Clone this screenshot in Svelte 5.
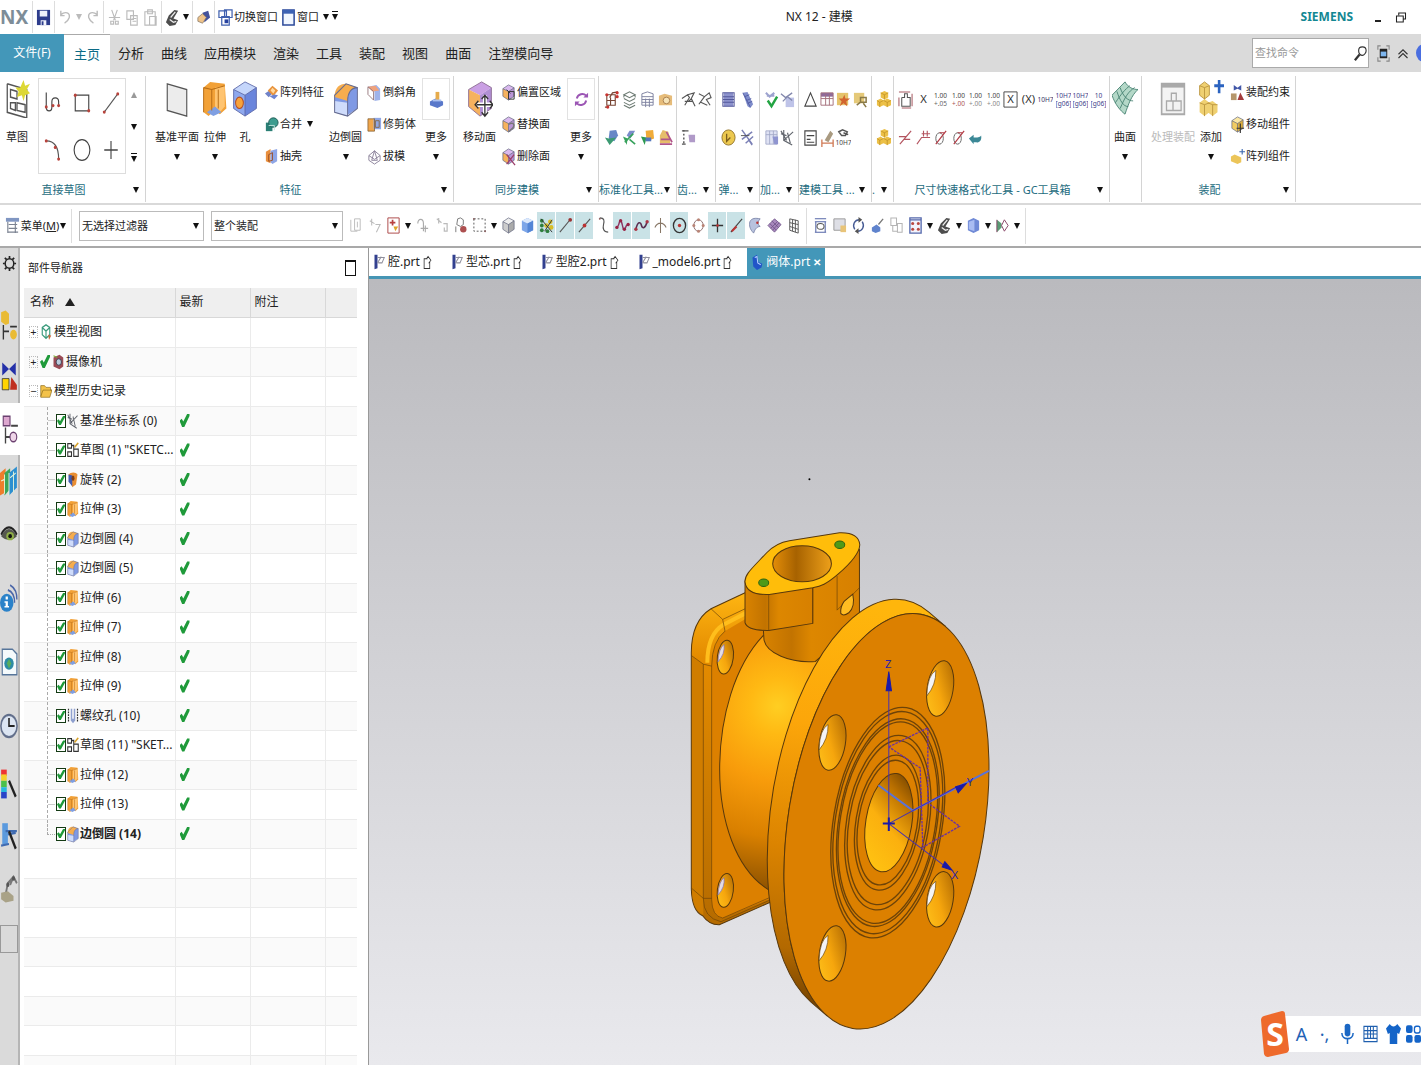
<!--
  @component ModelingWorkspace
  @fileoverview CAD modeling window: title bar, ribbon, selection bar,
  part navigator and the graphics area with the current part.
-->
<script lang="ts">
  // ===========================================================================
  //  Icon shapes (16 x 20)
  // ===========================================================================

  const cube = (top: string, left: string, right: string) =>
    `<path fill="${top}" d="M2 6l6-4 6 3-6 4z"/><path fill="${left}" d="M2 6l6 3v9l-6-4z"/><path fill="${right}" d="M14 5l-6 4v9l6-4z"/><path d="M2 6l6-4 6 3v9l-6 4-6-4zM2 6l6 3 6-4M8 9v9" fill="none" stroke="#5b5f78" stroke-width=".7"/>`;

  const line = (d: string, color = '#333', width = 1.2) =>
    `<path d="${d}" fill="none" stroke="${color}" stroke-width="${width}"/>`;

  const fill = (d: string, color: string) => `<path d="${d}" fill="${color}"/>`;

  const dots = (points: number[][], color = '#b8433c', r = 1.3) =>
    points.map(([x, y]) => `<circle cx="${x}" cy="${y}" r="${r}" fill="${color}"/>`).join('');

  const word = (text: string, y: number, size: number, color: string) =>
    `<text x="8" y="${y}" text-anchor="middle" font-size="${size}" fill="${color}">${text}</text>`;

  const words = (top: string, bottom: string, a = '#444', b = a) => word(top, 8, 7, a) + word(bottom, 17, 7, b);

  const blue = cube('#c5d6fb', '#8fa9ee', '#6a85dc');
  const violet = cube('#d9b8ee', '#f6b25e', '#b995d6');
  const yellow = cube('#fbe7a2', '#f1cc62', '#dcae3d');
  const grey = cube('#eee', '#ccc', '#aaa');
  const nxMark =
    fill('M4 8l6-6 4 1-5 8 5 2-3 5-6 1-4-4z', '#4d4d4d') + line('M6 10l5-6M5 12l4 3 3-1', '#eee', 1.3);
  const yellowPair =
    fill('M5 3l4-2 4 2v5l-4 2-4-2zM1 11l4-2 3 2v5l-4 2-3-2zM8 11l4-2 4 2v5l-4 2-4-2z', '#ecc047') +
    line('M5 3l4 2v5M9 5l4-2M1 11l3 2v5M4 13l4-2M8 11l4 2v5M12 13l4-2', '#b98a20', 0.7);

  const icons: Record<string, string> = {
    save: fill('M1 2h14v16H1z', '#2d3c8c') + fill('M4 3h8v6H4zM5 13h6v5H5z', '#eef1fb') + fill('M6 14h2v4H6z', '#2d3c8c'),
    undo: line('M3 7c5-4 10-2 9 3-1 3-3 5-5 6M3 3v5h4', '#bbb', 1.5),
    redo: line('M13 7C8 3 3 5 4 10c1 3 3 5 5 6M13 3v5H9', '#bbb', 1.5),
    cut: line('M5 2l4 11M11 2L7 13M2 10h12', '#bbb') + line('M4 14h3v3H4zM9 14h3v3H9z', '#bbb'),
    copy: line('M2 3h7v9H2zM6 8h7v10H6zM8 11h4M8 14h4', '#bbb'),
    paste: line('M2 4h11v14H2zM5 2h5v4H5zM7 9h7v9H7z', '#bbb'),
    nx: nxMark,
    touch: fill('M7 5l6-2 2 7-6 5z', '#43519b') + fill('M2 10l5-4 4 4-4 6-5-2z', '#efc38a') + line('M2 10l5-4 4 4-4 6-5-2z', '#876', 0.8),
    switchWin: line('M1 3h8v7H1zM7 2h8v8H7zM4 9h8v9H4z', '#3f5fae', 1.3) + fill('M7 12h4v4H7z', '#2742a0'),
    win: fill('M2 2h12v16H2z', '#f0f6ff') + line('M2 2h12v16H2z', '#2c4a9a', 1.6) + fill('M2 2h12v4H2z', '#3c62b4'),
    restore: line('M2 8h9v8H2zM5 7V4h9v8h-3', '#222', 1.4),
    close: line('M3 4l10 12M13 4L3 16', '#222', 1.6),
    search: line('M7 11l-5 6', '#333', 2.4) + line('M10 3c3 0 4 2 4 4s-2 5-4 5-4-2-4-5 2-4 4-4z', '#333', 1.2),
    full: line('M2 6V2h3M11 2h3v4M14 14v4h-3M5 18H2v-4', '#888') + fill('M4 5h8v10H4z', '#222') + fill('M5 8h6v5H5z', '#7eb6ee'),
    up: line('M2 11l6-6 6 6M2 16l6-6 6 6', '#333', 1.5),

    sketch: line('M2 2v15l12 3V5L2 2M4 5l4 1v4l-4-1zM4 12h3v4l-3-1zM8 12l5 1v4l-5-1z', '#555', 0.8) + fill('M12 0l1 3 3-1-2 3 2 2-3 1-1 3-1-3-3 1 1-3-2-2 3 0z', '#ddd834'),
    spline: line('M2 2v11c0 4 5 4 5 0V9c0-4 6-4 6 0v3', '#444', 1) + dots([[2, 13], [8, 12], [13, 12]]),
    rect: line('M2 4h12v12H2z', '#444', 1) + dots([[2, 4], [14, 16]]),
    segment: line('M2 17L14 3', '#555', 1) + dots([[2, 17], [14, 3]]),
    arc: line('M2 3c8 0 11 6 11 14', '#555', 1) + dots([[2, 3], [10, 8], [13, 17]]),
    circle: '<ellipse cx="8" cy="10" rx="7" ry="8" fill="none" stroke="#444"/>',
    plus: line('M8 3v14M2 10h12', '#444', 1),

    plane: '<path d="M2 2l12 3v14L2 16z" fill="#ececec" stroke="#555" stroke-width=".7"/>',
    extrude: fill('M1 4l4-3 9 1 1 13-4 3-3-2-4 3-3-2z', '#f2a137') + fill('M8 4l6-1v11l-3 3-3-3z', '#ffc470') + fill('M3 17l5-3 4 3-5 2z', '#7f9fe2') + line('M1 4l5 1 8-2M6 5v11M10 5v10M1 4v13', '#b86d16', 0.6),
    hole: fill('M1 5l7-4 7 3-7 4z', '#c5d6fb') + fill('M1 5l7 3v11l-7-4z', '#8fa9ee') + fill('M15 4L8 8v11l7-4z', '#6a85dc') + line('M1 5l7-4 7 3v11l-7 4-7-4zM1 5l7 3 7-4M8 8v11', '#5b68a8', 0.5) + '<ellipse cx="4.6" cy="12" rx="2.4" ry="3" fill="#f8a33b" stroke="#b54f24" stroke-width=".6"/>',
    pattern: fill('M1 11l6-4 3 3-5 5z', '#7082c8') + fill('M4 8l5-5 6 5-5 6z', '#e8933c') + fill('M7 8l2-3 3 3-2 3z', '#ffd9a0') + fill('M6 14l5 3 4-4-4-1z', '#6c84d2'),
    unite: fill('M2 8h7v9H2z', '#2a7f75') + '<circle cx="10" cy="8" r="5" fill="#3d9c8f" stroke="#205b55"/>' + line('M5 11h6v5', '#bfe3dd', 1),
    shell: fill('M2 5l5-3v15l-5-2z', '#e98f3d') + fill('M7 4l7-2v13l-5 3-2-2z', '#8ea6e6') + line('M5 8l4-2v8l-4 1z', '#9b4f24', 1),
    blend: fill('M1 8l7-6 7 2v11l-7 4-7-2z', '#7f99e4') + fill('M1 9c0-5 3-7 7-7l7 2c-4 0-6 3-6 7z', '#f6ad4e') + fill('M1 11l8 1v7l-8-2z', '#cfdcfb') + line('M1 8l7-6 7 2v11l-6 4-8-2zM9 19v-8c0-4 2-7 6-7', '#666c91', 0.6),
    chamfer: fill('M1 4l9-2 4 4v12l-6 1V9z', '#9fb3ea') + fill('M1 4l8-1 4 5-7 1z', '#f0a27b') + line('M1 4v8l6 6V9z', '#8b6a70', 0.9),
    trim: fill('M1 4h7v13H1z', '#f0a64b') + fill('M7 3h8v12H7z', '#90a7e4') + line('M1 4h7v13H1zM9 6h4v7H9z', '#805c30', 0.8),
    draft: line('M5 14L8 4l3 10zM2 9l6 4 6-4-6-5zM2 9v5l6 4 6-4V9', '#8b829a', 1),
    more: fill('M1 12l6-3 8 3v4l-6 3-8-3z', '#5978ca') + fill('M7 2h4v9H7z', '#e6ab4b') + fill('M4 10h9v2H4z', '#aac0f0'),
    moveFace:
      fill('M1 5l8-4 6 3-7 4z', '#caa0e4') + fill('M1 5l7 3v11l-7-5z', '#f6b25e') + fill('M15 4L8 8v11l7-4z', '#b18fd4') +
      line('M1 5l8-4 6 3v11l-7 4-7-5z', '#8a6a90', 0.5) + line('M11 8v11M6 13h10', '#fff', 2.4) +
      line('M11 8v11M6 13h10M9 10l2-2 2 2M9 17l2 2 2-2M7 11l-2 2 2 2M14 11l2 2-2 2', '#333', 0.8),
    offsetRegion: violet + line('M8 9h6v8H8zM6 7l4 4', '#333', 1),
    replaceFace: violet + line('M8 10c5-3 7 0 5 3s-4 2-4 5', '#777', 1.4),
    deleteFace: violet + line('M6 8l9 11M14 8L6 18', '#9c3f6b', 1.4),
    sync: line('M3 9c1-5 7-6 10-3M13 11c-1 5-7 6-10 3', '#9b55b4', 2) + fill('M10 8h5V3zM6 12H1v5z', '#9b55b4'),

    frame: line('M3 5h9v11H3zM1 18h4M6 8l3-5 6-1M7 8v8M3 11h9', '#743', 1.2) + dots([[14, 3], [14, 7], [4, 18], [3, 5]], '#c8332f', 1.7),
    stack: line('M2 5l6-3 6 3-6 3zM2 9l6 3 6-3M2 13l6 3 6-3M2 16l6 3 6-3M2 5v3M14 5v3', '#6c7a72', 1.1),
    stackPage: line('M2 4l6-2 6 2v12H2zM2 7h12M2 10h12M2 13h12M6 9v9M10 9v9', '#7d829f', 1),
    photo: fill('M1 6l6-2 8 2v10H1z', '#e6bc7a') + '<circle cx="9" cy="11" r="3.5" fill="#f6e4b8" stroke="#a98050"/>',
    checkBlue: fill('M6 3l7-1 2 6-4 6-6-3z', '#6787c6') + fill('M1 10l4 1 8-1-7 8z', '#3c9a72'),
    checkKey: fill('M8 3l6 0-5 8-4-3z', '#7b8ccb') + fill('M1 9l5 2-1 7z', '#37a25c') + line('M3 15l9-9M8 12l6 5', '#37a25c', 1.8),
    checkGold: fill('M6 3l8-1 1 9-8 3z', '#f0ab38') + fill('M1 9l6 1-2 8z', '#2d9a51') + fill('M6 10h6v4H6z', '#5678bd'),
    stamp: fill('M2 8l3-6 6 2 2 8v4H2z', '#e6bd6a') + line('M2 17h13M3 12h10M9 4l6 11', '#b0568a', 1.8),
    gears: line('M1 9l6-4 2 3-5 8M7 5l7-2-3 6 4 8M8 12l3-3M4 12h8', '#555', 1.2),
    gearPair: line('M2 4l6 3 5-4 2 5-5 2 4 6M8 7l-6 8M4 13l7 3', '#555', 1.2),
    list: line('M3 2v2M3 6v2M3 10v2M3 14v2M1 3h7M1 17h4', '#555', 1.5) + fill('M8 7h7v8H9z', '#b09ac8'),
    spring: fill('M3 3h10v14H3z', '#8c92cd') + line('M2 3h12v14H2zM2 7h12M2 10h12M2 13h12', '#53589a', 1.1),
    bolt: fill('M3 3l5-1 6 13-3 4-3-2z', '#7f8dcb') + line('M3 3l8 15M5 7l5-2M7 11l5-2M8 14l5-2', '#4f58a0', 0.9),
    coin: '<ellipse cx="8" cy="10" rx="7" ry="8" fill="#ecc84f" stroke="#94752a"/>' + line('M6 6v8l4-4', '#7c5e1d', 1.4),
    cutSpring: line('M2 2l11 15M2 12l11-8M6 16l8-7M9 12l4 6', '#7a7fb5', 1.6) + line('M1 8h9', '#555', 1),
    tick: line('M2 3l4 4 5-4M3 6h8', '#9da3cf', 2.2) + line('M4 11l4 6 6-10', '#23a443', 2.6),
    tickPage: fill('M6 8h9v10H6z', '#bec3e8') + line('M1 4l5 4 7-5M3 12l5-5 5 4', '#8287ac', 1.4),
    page: fill('M2 3h12v14H2z', '#dfe2f4') + line('M2 3h12v14H2zM2 7h12M6 3v14M10 3v14', '#a2a8c6', 0.9) + fill('M9 9h6v8h-4z', '#8f95d0'),
    csys: line('M4 2v11l9 5M4 13l10-9M1 6l6 2M8 5l3 11M1 3l6 10', '#60646c', 1.2),
    triangle: line('M8 3l6 14H2z', '#444', 1.2),
    redTable: fill('M1 3h13v4H1z', '#8f6a9a') + line('M1 3h13v13H1zM1 9h13M6 5v11M10 5v11', '#a5707b', 1),
    star: fill('M1 3h12v13H1z', '#e5c36b') + fill('M9 5l1 4 5 0-4 3 1 5-4-3-4 3 2-5-3-3h4z', '#d2642e'),
    starGlass: fill('M1 3h11v11H1z', '#e5c979') + line('M8 8h6v5H8zM4 16l5-4M11 14l3 4', '#8a7a48', 1.6),
    note: line('M2 3h12v15H2zM4 8h8M4 12h4M4 15h8', '#444', 1.2),
    dim: fill('M5 13l6-10 3 3-5 9z', '#a99a80') + line('M2 16h12M2 12v8M14 12v8', '#d07a55', 1.4),
    zoomText: line('M3 4l4-2 5 2-2 4-4 0zM8 5l5 2', '#555', 1.6) + word('10H7', 18, 7, '#444'),
    parts: yellowPair,
    linear: line('M4 8v9h9V8H10V4H7v4H4', '#555', 1.1) + line('M1 8v9M1 2h12M15 4v13M4 19h10', '#a85a62', 1.1),
    letterX: word('X', 14, 12, '#333'),
    boxX: line('M1 2h14v16H1z', '#444', 1) + word('X', 14, 12, '#333'),
    parenX: word('(X)', 14, 12, '#333'),
    num1: words('1.00', '+.05', '#444', '#666'),
    num2: words('1.00', '+.00', '#444', '#a55'),
    num3: words('1.00', '+.00', '#444', '#888'),
    fit: word('10H7', 13, 7, '#336'),
    fitTol: words('10H7', '[g06]', '#3c3d89'),
    tol: words('10', '[g06]', '#3c3d89'),
    redDim: line('M2 17L14 3M1 9h8M6 12h7', '#b45560', 1.3),
    redFlag: line('M1 17l5-7h9M6 6h9M8 3v6M12 3v6', '#b45560', 1.2),
    diameter: '<ellipse cx="7" cy="11" rx="4" ry="6" fill="none" stroke="#666"/>' + line('M3 17L14 3M7 5h6', '#b23b45', 1.3),
    back: fill('M1 11l5-4v3h4c3 0 4-2 4-2 1 5-2 8-5 7H6v2z', '#3b8896'),

    surface: fill('M0 8l8-7c2 3 5 4 8 4-4 3-6 8-8 13-3-2-6-5-8-10z', '#b4d8c8') + line('M0 8l8-7c2 3 5 4 8 4-4 3-6 8-8 13-3-2-6-5-8-10zM3 6c2 5 4 8 7 8M5 4c2 5 5 7 8 7M2 12c4-5 6-7 9-9M5 15c3-6 5-9 9-11', '#44806f', 0.5),
    process: '<path d="M1 2h14v16H1z" fill="#f3f3f3" stroke="#aaa"/>' + fill('M1 2h14v2H1z', '#aaa') + line('M4 11h4v5H4zM7 7h3v4H7zM8 11h5v5H8z', '#aaa', 0.8),
    add: fill('M1 3l3-2 3 2v5l-3 2-3-2zM1 12l3-2 3 2v5l-3 2-3-2zM6 12l3-1 3 2v4l-3 2-3-2z', '#efd071') + line('M1 3l3 1v6M4 4l3-1M1 12l3 1v6M4 13l3-1M6 12l3 1v6M9 13l3 0M1 3l3-2 3 2v5l-3 2-3-2z', '#b9943c', 0.5) + line('M13 0v7M10 3h6', '#2b63c0', 1.6),
    constraint: fill('M4 2l4 3 4-3v6L8 6 4 8z', '#4257a8') + fill('M1 11h6v7H1z', '#b5966b') + fill('M8 18l3-8 4 8z', '#a33b3b'),
    moveComp: yellow + line('M11 9v10M7 14h8', '#333', 1.2),
    patternComp: fill('M1 10l4-2 7 3v5l-4 2-7-3z', '#ecc559') + line('M13 2v6M10 5h6', '#3d69b0', 1.2),

    menu: fill('M1 2h14v4H1z', '#8096c2') + line('M3 6v12M4 9h9M4 13h9M3 17h11M11 6v12', '#7b8291', 1.2),
    dimmed: line('M3 4v12h7M7 3h6v12H7zM10 6v6', '#bbb', 1),
    dimmedArrow: line('M3 5l5 3M5 3v7M9 9h5l-4 8', '#bbb', 1.1),
    redBox: '<path d="M2 2h12v16H2z" fill="#fff" stroke="#a44"/>' + line('M4 7h6M7 4v6', '#b84040', 1.8) + fill('M8 11h5l-3 5z', '#dfa42b'),
    pin: line('M3 8c0-6 6-6 6 0v8M6 13h8M11 10v7', '#aaa', 1.2),
    pinFlag: line('M3 3l5 4M5 2v6M10 8h4v8h-3v-4', '#bbb', 1.3),
    nodeRed: line('M5 3l3-1 3 2v5l-3 2-4-2z', '#777', 1) + dots([[11, 14]], '#ad5050', 3.4) + line('M3 11v6', '#777', 1),
    marquee: '<path d="M2 3h12v13H2z" fill="none" stroke="#555" stroke-dasharray="2 2"/>' + dots([[2, 3], [14, 16]], '#8a5f5f', 1),
    cubeGrey: grey,
    cubeBlue: fill('M2 5l6-3 6 3v10l-6 3-6-3z', '#7da6e8') + fill('M2 5l6-3 6 3-6 3z', '#dbe8fb') + fill('M8 8l6-3v10l-6 3z', '#5486d6'),
    snap: dots([[3, 5], [3, 10], [3, 15], [9, 16]], '#2e7e3e', 2) + dots([[8, 10], [12, 6], [13, 12]], '#d8bd26', 2.4) + line('M2 3l12 14M14 4L6 16', '#333', 1),
    snapEnd: line('M2 17L12 5', '#555') + dots([[13, 4]], '#933', 2),
    snapMid: line('M2 17L14 3', '#555') + dots([[8, 10]], '#b33', 2),
    snapCurve: line('M4 2c5 0 5 3 4 7s0 8 5 8', '#555') + dots([[4, 3]], '#855', 1),
    snapPole: line('M1 12c4 0 3-8 5-7s2 10 4 9 1-6 5-4', '#8b3664', 1.5) + dots([[2, 12], [6, 5], [10, 14], [14, 9]], '#924', 1.8),
    snapWave: line('M2 14c2-9 5-8 6-4s4 3 6-4', '#5a2e50', 1.7) + dots([[2, 14], [14, 6]], '#a34', 1.8),
    snapInt: line('M8 2v16M2 12c3-6 9-6 12 0', '#876', 1.1),
    snapCenter: '<ellipse cx="8" cy="10" rx="6.5" ry="7.5" fill="none" stroke="#333" stroke-width="1.4"/>' + dots([[8, 10]], '#b33', 1.8),
    snapQuad: '<ellipse cx="8" cy="10" rx="5" ry="6" fill="none" stroke="#866"/>' + dots([[8, 4], [8, 16], [3, 10], [13, 10]], '#b98476', 1.6),
    snapPoint: line('M8 3v14M2 10h12', '#333', 1.4) + dots([[8, 10]], '#b33', 1.4),
    snapOn: line('M2 17L14 3', '#444') + line('M3 16l5-5', '#b33', 2.2),
    face: fill('M2 6c2-4 6-4 11-3-3 3-3 6 0 8-4 0-6 4-7 7-4-4-5-8-4-12z', '#b8c2de') + line('M2 6c2-4 6-4 11-3-3 3-3 6 0 8-4 0-6 4-7 7-4-4-5-8-4-12z', '#7781a5', 0.9) + dots([[10, 7]], '#b33', 1.3),
    mesh: fill('M1 10l7-7 7 6-7 8z', '#a889bd') + line('M1 10l7-7 7 6-7 8zM3 8l7 7M5 5l7 7M4 13l7-7M6 15l7-8', '#6a4e83', 0.8),
    grid: line('M4 3l9 2v13l-9-3zM4 7l9 2M4 11l9 3M7 4v12M10 4v13', '#555', 1),
    fitView: line('M2 3h12M2 6h12M3 6v11M13 6v11M2 17h12', '#5667a8', 1.1) + line('M8 8c5 0 5 6 0 6s-5-6 0-6', '#555', 1.1),
    windowSel: fill('M2 3h12v12H2z', '#dedfe6') + line('M2 3h12v12H2z', '#999', 1) + fill('M9 10h6v7H9z', '#e8c479'),
    rotate: line('M4 14C1 9 4 4 9 4M12 6c3 5 0 10-5 10', '#465b94', 1.5) + fill('M8 1l4 3-4 3zM8 19l-4-3 4-3z', '#555'),
    brush: fill('M2 12l5-3 4 3v4l-5 2-4-2z', '#5f83cd') + line('M9 9l5-6', '#777', 1.4),
    pages: line('M2 2h6v8H2zM4 10v6h5M9 8h5v9H9z', '#b5b5b5', 1.1),
    table: fill('M2 2h12v16H2z', '#f3f3fb') + line('M2 2h12v16H2zM2 4h12', '#5569ac', 1.4) + dots([[5, 8], [11, 8], [5, 14], [11, 14]], '#b9473f', 1.6),
    shade: fill('M2 5l6-3 6 3v10l-6 3-6-3z', '#6f89d6') + fill('M3 6l6-2v12l-6-2z', '#a9bcf2'),
    clip: fill('M2 4l5 4v4l-5 5z', '#5a9b74') + line('M10 4l4 6-4 6-3-6zM2 4v13', '#846', 1),

    gear:
      '<ellipse cx="8" cy="10" rx="4.6" ry="5" fill="none" stroke="#222" stroke-width="1.6"/>' +
      line('M8 2v3M8 15v3M1 10h2M13 10h2M3 4l2 2M11 6l2-2M3 16l2-2M11 14l2 2', '#222', 1.8),
    railAsm: fill('M1 2l4-1 3 2v6l-3 1-4-2z', '#e9bb35') + line('M3 10v9M3 14h5M9 11h6', '#333', 1.2) + '<ellipse cx="12" cy="16" rx="3" ry="3" fill="#e9bb35"/>',
    railCon: fill('M2 1l6 4 6-4v8L8 5 2 9z', '#2430a8') + '<path d="M2 11h6v7H2z" fill="#ffd400" stroke="#333" stroke-width=".6"/>' + fill('M9 18l1-8 5 5v3z', '#c03020'),
    railPart: '<path d="M2 2h6v6H2z" fill="#dda7cf" stroke="#6b4170"/>' + line('M4 9v10M4 15h4M9 8h6', '#444', 1.2) + '<circle cx="11" cy="15" r="3" fill="#efd5e8" stroke="#6b4170"/>',
    books: fill('M0 5l5-3v15l-5 2z', '#ee7d2b') + fill('M4 5l5-3v13l-5 4z', '#3ba558') + fill('M8 5l7-4v13l-7 5z', '#2c8fd0') + line('M4 6v12M8 5v14M12 4v13M4 9l-3 1M9 8l5-3', '#e9f4d8', 0.8),
    eye: fill('M1 12c4-6 10-6 14 0-4 3-10 3-14 0z', '#55574f') + '<ellipse cx="9" cy="12" rx="3.4" ry="2.6" fill="#8fae48"/><ellipse cx="9" cy="12" rx="1.6" ry="1.3" fill="#111"/>' + line('M1 11c4-6 10-6 14 0', '#222', 1.4),
    info: '<ellipse cx="6" cy="13" rx="6" ry="5.600" fill="#2b82c9"/>' + fill('M5 9h2v2H5zM4 12h3v3h1v1H4v-1h1v-2H4z', '#fff') + line('M7 5c4 1 6 4 6 8M9 2c5 2 6 5 6 9', '#4a66a8', 1.2),
    web: '<path d="M2 2h9l4 3v13H2z" fill="#f5fafc" stroke="#56759a"/><ellipse cx="8" cy="11" rx="4.2" ry="3.8" fill="#2d8ba6"/>' + fill('M8 8l2 3-2 3-2-3z', '#59ad5b'),
    clock: '<ellipse cx="8" cy="10" rx="7.2" ry="7" fill="#dce5f2" stroke="#63708c" stroke-width="1.4"/>' + line('M8 5v5h5', '#222', 1.4),
    rainbow: fill('M1 1h5v4H1z', '#e33') + fill('M1 4h5v4H1z', '#f6d02d') + fill('M1 8h5v4H1z', '#4cc04b') + fill('M1 12h5v3H1z', '#28b7df') + fill('M1 15h5v4H1z', '#2a44c8') + line('M8 8l6 10', '#222', 2),
    wand: fill('M2 2h5v13H2z', '#5b9ade') + line('M1 16l7-1M5 7h10M7 9l7-1', '#3f6bb1', 1.4) + line('M8 7l6 11', '#222', 2),
    arm: line('M5 14l2-7 5-4 3 4M12 3l-3 5', '#777', 1.6) + fill('M1 13l6-1 5 3v3l-7 1-4-2z', '#a9a287') + dots([[7, 8], [12, 4]], '#555', 1.4),

    views: line('M8 2l5 3v8l-5 4-5-4V5zM3 5l5 4 5-4M8 9v8', '#3b9b7c', 1.5) + fill('M11 13l4 1-3 5z', '#c7673d'),
    camera: fill('M2 5l8-3 5 3v10l-5 3-8-3z', '#9a4b55') + '<circle cx="9" cy="10" r="3.600" fill="#bcd" stroke="#334"/>' + line('M2 3l5 2', '#7a3', 1.3),
    folder: '<path d="M1 4h5l2 2h6v3h2l-3 8H1z" fill="#f3c24a" stroke="#8a6a1c" stroke-width=".8"/>' + line('M1 16l3-7h12', '#8a6a1c', 0.8),
    sketchSm: line('M1 3h5v5H1zM1 12h5v5H1zM9 9h6v8H9zM6 5h3v4', '#333', 1.4) + line('M10 7l5-5', '#d8a22a', 2),
    revolve: fill('M2 4c3-3 10-3 12 0l-2 11-5 3z', '#e98e32') + fill('M2 4l5 1v12l-5-5z', '#3f5bb0') + '<ellipse cx="8" cy="8" rx="2" ry="3" fill="#7c3d1a"/>',
    thread: '<path d="M2 2v14M14 2v14" stroke="#333" stroke-width="1.6" stroke-dasharray="2 1"/>' + fill('M5 2h2v11h2V2h2v13l-3 3-3-3z', '#8fa0cf'),

    part: fill('M2 2h4v15l-4 1z', '#32408f') + line('M6 5h9l-3 6H7M6 11l5-7', '#8f8f9c', 1.3),
    partActive: fill('M2 5l6-3 2 8 5 2-1 4-6 3-5-4z', '#2155c8') + line('M5 5l3-1 1 7 4 2', '#b9d2ff', 1.3),
    modified: line('M8 5H2v13h10V9M6 5l3-3 5 5-4 4M3 5h3', '#333', 1.4),

    mic: fill('M5 3c0-3 6-3 6 0v7c0 3-6 3-6 0z', '#1a67c4') + line('M2 9c0 7 12 7 12 0M8 14v5', '#1a67c4', 1.6),
    keyboard: line('M1 3h14v14H1zM5 3v11M8 3v11M11 3v11M1 7h14M1 10h14M1 14h14', '#1f5fae', 1.1),
    shirt: fill('M0 5l4-4c2 3 6 3 8 0l4 4-2 5-2-1v10H4V9l-2 1z', '#1464c8'),
    apps: '<rect x="0" y="2" width="7" height="7" rx="2" fill="#1464c8"/><rect x="9" y="3" width="6" height="6" rx="2" fill="none" stroke="#1464c8" stroke-width="1.4"/><rect x="0" y="11" width="7" height="7" rx="2" fill="#1464c8"/><rect x="9" y="11" width="7" height="7" rx="2" fill="#1464c8"/>'
  };

  // ===========================================================================
  //  Window content
  // ===========================================================================

  const tabs = ['主页', '分析', '曲线', '应用模块', '渲染', '工具', '装配', '视图', '曲面', '注塑模向导'];

  const shapes = ['spline', 'rect', 'segment', 'arc', 'circle', 'plus'];

  const toolGroups = [
    { name: '标准化工具...', size: 'w4', cols: 4, icons: ['frame', 'stack', 'stackPage', 'photo', 'checkBlue', 'checkKey', 'checkGold', 'stamp'] },
    { name: '齿...', size: 'w2', cols: 2, icons: ['gears', 'gearPair', 'list'] },
    { name: '弹...', size: 'w2b', cols: 2, icons: ['spring', 'bolt', 'coin', 'cutSpring'] },
    { name: '加...', size: 'w2', cols: 2, icons: ['tick', 'tickPage', 'page', 'csys'] },
    { name: '建模工具 ...', size: 'w4b', cols: 4, icons: ['triangle', 'redTable', 'star', 'starGlass', 'note', 'dim', 'zoomText'] },
    { name: '.', size: 'w1', cols: 1, icons: ['parts', 'parts'] },
    {
      name: '尺寸快速格式化工具 - GC工具箱',
      size: 'w12',
      cols: 12,
      icons: ['linear', 'letterX', 'num1', 'num2', 'num3', 'num3', 'boxX', 'parenX', 'fit', 'fitTol', 'fitTol', 'tol', 'redDim', 'redFlag', 'diameter', 'diameter', 'back']
    }
  ];

  // '|' is a separator, 'v' a drop-down arrow, a leading '*' marks an active toggle
  const selectionTools = (
    'dimmed dimmedArrow redBox v pin pinFlag nodeRed marquee v cubeGrey cubeBlue *snap *snapEnd *snapMid ' +
    'snapCurve *snapPole *snapWave snapInt *snapCenter snapQuad *snapPoint *snapOn face mesh grid | ' +
    'fitView windowSel rotate brush pages table v nx v shade v clip v |'
  ).split(' ');

  const rail = [
    { name: 'gear', size: 'first' },
    { name: 'railAsm' },
    { name: 'railCon' },
    { name: 'railPart', size: 'current' },
    { name: 'books' },
    { name: 'eye' },
    { name: 'info', size: 'tall lead' },
    { name: 'web', size: 'tall' },
    { name: 'clock', size: 'tall' },
    { name: 'rainbow' },
    { name: 'wand' },
    { name: 'arm' }
  ];

  const features = [
    { icon: 'csys', name: '基准坐标系 (0)' },
    { icon: 'sketchSm', name: '草图 (1) "SKETC...' },
    { icon: 'revolve', name: '旋转 (2)' },
    { icon: 'extrude', name: '拉伸 (3)' },
    { icon: 'blend', name: '边倒圆 (4)' },
    { icon: 'blend', name: '边倒圆 (5)' },
    { icon: 'extrude', name: '拉伸 (6)' },
    { icon: 'extrude', name: '拉伸 (7)' },
    { icon: 'extrude', name: '拉伸 (8)' },
    { icon: 'extrude', name: '拉伸 (9)' },
    { icon: 'thread', name: '螺纹孔 (10)' },
    { icon: 'sketchSm', name: '草图 (11) "SKET...' },
    { icon: 'extrude', name: '拉伸 (12)' },
    { icon: 'extrude', name: '拉伸 (13)' },
    { icon: 'blend', name: '边倒圆 (14)' }
  ];

  const blankRows = Array.from({ length: 8 });

  const files = ['腔.prt', '型芯.prt', '型腔2.prt', '_model6.prt'];

  const flangeHoles = [
    [782, 507],
    [459, 669],
    [782, 1139],
    [459, 1301]
  ];
  const plateHoles = [
    [138, 413],
    [138, 1112]
  ];
  const rings = [0.555, 0.535, 0.5, 0.485, 0.42, 0.395, 0.325, 0.3];

  let activeTab = $state('主页');
  let filter = $state('无选择过滤器');
  let scope = $state('整个装配');
  let query = $state('');
</script>

{#snippet icon(name: string, size = '')}
  <svg class="icon {size}" viewBox="0 0 16 20" preserveAspectRatio="none" aria-hidden="true">{@html icons[name]}</svg>
{/snippet}

{#snippet big(name: string, label: string, arrow = false, disabled = false)}
  <button class="big" {disabled}>
    <span class="big-icon">{@render icon(name, 'large')}</span>
    <span>{label}</span>
    {#if arrow}<i class="arrow"></i>{/if}
  </button>
{/snippet}

{#snippet more(name: string)}
  <button class="big more">
    <span class="more-box">{@render icon(name)}</span>
    <span>更多</span>
    <i class="arrow"></i>
  </button>
{/snippet}

{#snippet small(name: string, label: string, arrow = false)}
  <button class="small">{@render icon(name)}<span>{label}</span>{#if arrow}<i class="arrow"></i>{/if}</button>
{/snippet}

{#snippet footer(label: string)}
  <div class="group-footer">
    <span>{label}</span>
    <button aria-label="{label} 选项"><i class="arrow"></i></button>
  </div>
{/snippet}

<div class="window">
  <header class="title-bar">
    <div class="quick">
      <b class="brand">NX</b>
      <i class="rule"></i>
      <button aria-label="保存">{@render icon('save')}</button>
      <i class="rule"></i>
      <button aria-label="撤消">{@render icon('undo')}</button>
      <i class="arrow pale"></i>
      <button aria-label="重做">{@render icon('redo')}</button>
      <i class="rule"></i>
      <button aria-label="剪切">{@render icon('cut')}</button>
      <button aria-label="复制">{@render icon('copy')}</button>
      <button aria-label="粘贴">{@render icon('paste')}</button>
      <i class="rule"></i>
      <button aria-label="重复命令">{@render icon('nx')}</button>
      <i class="arrow"></i>
      <i class="rule"></i>
      <button aria-label="触控">{@render icon('touch')}</button>
      <i class="rule"></i>
      <button class="text">{@render icon('switchWin')}切换窗口</button>
      <button class="text">{@render icon('win')}窗口<i class="arrow"></i></button>
      <i class="arrow bar"></i>
    </div>
    <div class="title">NX 12 - 建模</div>
    <b class="maker">SIEMENS</b>
    <div class="controls">
      <button aria-label="最小化"><i class="minimize"></i></button>
      <button aria-label="还原">{@render icon('restore', 'tiny')}</button>
      <button aria-label="关闭">{@render icon('close', 'tiny')}</button>
    </div>
  </header>

  <nav class="tab-bar">
    <button class="file">文件(F)</button>
    {#each tabs as tab}
      <button class="tab" class:selected={tab === activeTab} onclick={() => (activeTab = tab)}>{tab}</button>
    {/each}
    <label class="search">
      <input type="text" placeholder="查找命令" aria-label="查找命令" bind:value={query} />
      {@render icon('search')}
    </label>
    <button class="tool" aria-label="全屏">{@render icon('full')}</button>
    <button class="tool" aria-label="最小化功能区">{@render icon('up', 'tiny')}</button>
    <button class="help" aria-label="帮助"></button>
  </nav>

  <section class="ribbon">
    <div class="group w-sketch">
      <div class="group-body">
        {@render big('sketch', '草图')}
        <div class="gallery">
          {#each shapes as shape}
            <button aria-label={shape}>{@render icon(shape, 'medium')}</button>
          {/each}
        </div>
        <div class="scroller">
          <i class="arrow flip"></i>
          <i class="arrow"></i>
          <i class="arrow bar"></i>
        </div>
      </div>
      {@render footer('直接草图')}
    </div>

    <div class="group w-feature">
      <div class="group-body">
        {@render big('plane', '基准平面', true)}
        {@render big('extrude', '拉伸', true)}
        {@render big('hole', '孔')}
        <div class="stack">
          {@render small('pattern', '阵列特征')}
          {@render small('unite', '合并', true)}
          {@render small('shell', '抽壳')}
        </div>
        {@render big('blend', '边倒圆', true)}
        <div class="stack">
          {@render small('chamfer', '倒斜角')}
          {@render small('trim', '修剪体')}
          {@render small('draft', '拔模')}
        </div>
        {@render more('more')}
      </div>
      {@render footer('特征')}
    </div>

    <div class="group w-sync">
      <div class="group-body">
        {@render big('moveFace', '移动面')}
        <div class="stack">
          {@render small('offsetRegion', '偏置区域')}
          {@render small('replaceFace', '替换面')}
          {@render small('deleteFace', '删除面')}
        </div>
        {@render more('sync')}
      </div>
      {@render footer('同步建模')}
    </div>

    {#each toolGroups as group}
      <div class="group {group.size}">
        <div class="tool-grid cols{group.cols}">
          {#each group.icons as name}
            <button aria-label={name}>{@render icon(name)}</button>
          {/each}
        </div>
        {@render footer(group.name)}
      </div>
    {/each}

    <div class="group w-surface">
      <div class="group-body tight">{@render big('surface', '曲面', true)}</div>
    </div>

    <div class="group w-assembly">
      <div class="group-body">
        {@render big('process', '处理装配', false, true)}
        {@render big('add', '添加', true)}
        <div class="stack">
          {@render small('constraint', '装配约束')}
          {@render small('moveComp', '移动组件')}
          {@render small('patternComp', '阵列组件')}
        </div>
      </div>
      {@render footer('装配')}
    </div>
  </section>

  <section class="selection-bar">
    <button class="menu">{@render icon('menu')}<span>菜单(<u>M</u>)</span><i class="arrow"></i></button>
    <label class="picker">
      <select aria-label="选择过滤器" bind:value={filter}><option>无选择过滤器</option></select>
      <i class="arrow"></i>
    </label>
    <label class="picker">
      <select aria-label="选择范围" bind:value={scope}><option>整个装配</option></select>
      <i class="arrow"></i>
    </label>
    <div class="tools">
      {#each selectionTools as tool}
        {#if tool === '|'}
          <i class="rule"></i>
        {:else if tool === 'v'}
          <button class="drop" aria-label="展开"><i class="arrow"></i></button>
        {:else}
          {@const name = tool.replace('*', '')}
          <button class:on={tool.startsWith('*')} aria-label={name}>{@render icon(name)}</button>
        {/if}
      {/each}
    </div>
  </section>

  <main>
    <aside class="rail">
      {#each rail as item}
        <button class={item.size ?? ''} aria-label={item.name}>{@render icon(item.name, item.size === 'first' ? '' : 'rail-icon')}</button>
      {/each}
      <i class="slot"></i>
    </aside>

    <section class="navigator">
      <div class="panel-title">
        <span>部件导航器</span>
        <button aria-label="最大化"></button>
      </div>
      <table>
        <thead>
          <tr><th class="name">名称 <i class="arrow sort"></i></th><th>最新</th><th>附注</th><th class="rest"></th></tr>
        </thead>
        <tbody>
          <tr>
            <td><div class="cell top"><button class="toggle" aria-label="展开">+</button>{@render icon('views', 'tree')}模型视图</div></td>
            <td></td><td></td><td></td>
          </tr>
          <tr>
            <td><div class="cell top"><button class="toggle" aria-label="展开">+</button><i class="check"></i>{@render icon('camera', 'tree')}摄像机</div></td>
            <td></td><td></td><td></td>
          </tr>
          <tr>
            <td><div class="cell top"><button class="toggle" aria-label="收起">−</button>{@render icon('folder', 'tree')}模型历史记录</div></td>
            <td></td><td></td><td></td>
          </tr>
          {#each features as feature, i}
            <tr class:last={i === features.length - 1}>
              <td>
                <label class="cell leaf">
                  <i class="branch"></i>
                  <input type="checkbox" checked />
                  {@render icon(feature.icon, 'tree')}
                  <span>{feature.name}</span>
                </label>
              </td>
              <td><i class="check"></i></td><td></td><td></td>
            </tr>
          {/each}
          {#each blankRows as _}
            <tr><td></td><td></td><td></td><td></td></tr>
          {/each}
        </tbody>
      </table>
    </section>

    <section class="graphics">
      <div class="file-tabs">
        {#each files as file}
          <button>{@render icon('part', 'tree')}<span>{file}</span>{@render icon('modified', 'mark')}</button>
        {/each}
        <button class="active">{@render icon('partActive', 'tree')}<span>阀体.prt</span><b>✕</b></button>
      </div>

      <svg class="scene" viewBox="370 280 1051 785" preserveAspectRatio="xMidYMid meet" role="img" aria-label="阀体">
        <defs>
          <linearGradient id="rim" gradientUnits="userSpaceOnUse" x1="560" y1="260" x2="400" y2="1480">
            <stop offset="0" stop-color="#ffb60c" />
            <stop offset=".3" stop-color="#fca60a" />
            <stop offset=".6" stop-color="#dc8400" />
            <stop offset=".85" stop-color="#b36900" />
            <stop offset="1" stop-color="#6f3f00" />
          </linearGradient>
          <radialGradient id="sphere" gradientUnits="userSpaceOnUse" cx="295" cy="560" r="560">
            <stop offset="0" stop-color="#ffce22" />
            <stop offset=".15" stop-color="#ffb913" />
            <stop offset=".4" stop-color="#f89c0b" />
            <stop offset=".7" stop-color="#d98000" />
            <stop offset="1" stop-color="#8a5000" />
          </radialGradient>
          <linearGradient id="bolt-hole" x1="0" y1="1" x2="1" y2="0">
            <stop offset="0" stop-color="#ffc51c" />
            <stop offset=".45" stop-color="#f6a60d" />
            <stop offset="1" stop-color="#a86200" />
          </linearGradient>
          <linearGradient id="bore" x1=".3" y1="1" x2=".7" y2="0">
            <stop offset="0" stop-color="#ffc312" />
            <stop offset=".45" stop-color="#fbb00e" />
            <stop offset=".8" stop-color="#b96f00" />
            <stop offset="1" stop-color="#7e4a00" />
          </linearGradient>
          <linearGradient id="neck" x1="0" x2="1" y1="0" y2="0">
            <stop offset="0" stop-color="#d98300" />
            <stop offset=".3" stop-color="#c27300" />
            <stop offset=".5" stop-color="#dd8700" />
            <stop offset="1" stop-color="#d78000" />
          </linearGradient>
          <linearGradient id="port" x1="0" x2="1" y1="0" y2="0">
            <stop offset="0" stop-color="#e38d08" />
            <stop offset=".4" stop-color="#a76200" />
            <stop offset="1" stop-color="#eda01a" />
          </linearGradient>
          <linearGradient id="plate-edge" x1="0" y1="0" x2="0" y2="1">
            <stop offset="0" stop-color="#ffb713" />
            <stop offset=".2" stop-color="#e48b00" />
            <stop offset="1" stop-color="#b56b00" />
          </linearGradient>
        </defs>

        <circle cx="810" cy="480" r="1" />

        <g class="model" transform="translate(680 520) scale(.3333)">
          <!-- rear plate -->
          <path class="line" fill="url(#plate-edge)" d="M210 214L95 268Q36 305 36 400V1108Q38 1175 70 1188Q90 1216 120 1215L290 1140V240Z" />
          <path fill="#d07d00" d="M38 410L72 434V1186Q38 1170 38 1108Z" />
          <path fill="#dc8000" d="M230 280L135 336Q100 370 97 440V1140Q98 1190 130 1195L290 1130V280Z" />
          <path fill="none" stroke="#ffbe1c" stroke-width="12" d="M84 430Q84 345 132 316L205 278" />
          <path class="edge" d="M36 408L72 434L97 440M95 268L130 300L137 335M130 300L210 262M72 434V1136M36 1105L72 1136H97M72 1136Q72 1195 125 1206L270 1142M97 1140V440Q98 365 137 335M97 1140Q98 1190 130 1195L270 1134" />
          {#each plateHoles as [cx, cy]}
            <ellipse class="line" {cx} {cy} rx="24" ry="51" transform="rotate(7 {cx} {cy})" fill="url(#bolt-hole)" />
            <path d="M{cx - 22} {cy + 14}Q{cx - 20} {cy - 26} {cx - 4} {cy - 38}Q{cx} {cy - 10} {cx - 22} {cy + 14}Z" fill="#e4dde2" stroke="#776bc0" stroke-width="2" />
          {/each}

          <!-- body -->
          <path class="line" fill="url(#sphere)" d="M252 348C165 440 121 595 121 750C121 900 168 1050 270 1112L500 1000V350Z" />

          <!-- neck and upper flange -->
          <path class="line" fill="url(#neck)" d="M250 300L254 362C262 400 330 432 408 426L540 310V90L400 200Z" />
          <path class="line" fill="url(#neck)" d="M197 185V310Q205 334 268 333L400 312V203Z" />
          <path class="edge" d="M268 226V333M400 203V312M473 170V272L540 205" />
          <path class="line" fill="#ffbc22" d="M520 224Q528 262 508 280Q492 292 484 282Q482 262 494 246Z" />
          <path class="line" fill="#ffbd0a" d="M197 188C195 165 220 145 262 100C285 76 305 68 330 64L480 40Q538 38 541 76C540 105 510 135 475 165C440 195 425 200 400 205L270 225Q202 228 197 188Z" />
          <ellipse class="line" cx="368" cy="133" rx="88" ry="54" fill="url(#port)" />
          <ellipse cx="481" cy="76" rx="15" ry="11" fill="#4f9a18" stroke="#2e6410" stroke-width="3" />
          <ellipse cx="253" cy="190" rx="15" ry="11" fill="#4f9a18" stroke="#2e6410" stroke-width="3" />

          <!-- front flange -->
          <path class="line" fill="url(#rim)" d="M748 278A294 629 9.26 0 0 394 1446L444 1489A294 629 9.26 0 1 798 321Z" />
          <ellipse class="line" cx="621" cy="905" rx="294" ry="629" transform="rotate(9.26 621 905)" fill="#dc8000" />
          {#each flangeHoles as [cx, cy]}
            <ellipse class="line" {cx} {cy} rx="39" ry="84" transform="rotate(9 {cx} {cy})" fill="url(#bolt-hole)" />
            <path class="edge" fill="#f4f4f6" d="M{cx - 40} {cy + 20}Q{cx - 38} {cy - 40} {cx - 13} {cy - 54}Q{cx - 12} {cy - 10} {cx - 40} {cy + 22}Z" />
          {/each}
          {#each rings as k}
            <ellipse class="ring" cx="625" cy="909" rx={294 * k} ry={629 * k} transform="rotate(9.26 625 909)" />
          {/each}
          <ellipse class="line" cx="628" cy="909" rx="69" ry="149" transform="rotate(9.26 628 909)" fill="url(#bore)" />

          <!-- datum axes and sketch -->
          <path class="datum" d="M597 797L700 873L928 754" />
          <path class="axis" d="M628 912V500M628 912L835 800M628 912L790 1035" />
          <path class="sketch" d="M628 682L745 625V850L840 920L730 983L722 745L628 682" />
          <path class="arrow-head" d="M628 456L636 514H620ZM860 792L836 820L828 802ZM818 1052L788 1042L796 1026Z" />
          <path class="cross" d="M610 912H646M628 894V934" />
          <text x="617" y="445">Z</text>
          <text x="862" y="800">Y</text>
          <text x="816" y="1078">X</text>
        </g>
      </svg>

      <div class="ime">
        <svg class="ime-logo" viewBox="0 0 30 46" aria-hidden="true">
          <path d="M1 9Q1 6 4 5L22 0Q25 0 25 3L29 38Q29 41 26 42L8 46Q5 46 4 43Z" fill="#ee6a2c" />
          <text x="15" y="35" text-anchor="middle">S</text>
        </svg>
        <button>A</button>
        <button>·,</button>
        <button aria-label="语音">{@render icon('mic')}</button>
        <button aria-label="键盘">{@render icon('keyboard')}</button>
        <button aria-label="皮肤">{@render icon('shirt')}</button>
        <button aria-label="工具箱">{@render icon('apps')}</button>
      </div>
    </section>
  </main>
</div>

<style>
  :global(body) {
    margin: 0;
    overflow: hidden;
  }

  .window {
    display: flex;
    flex-direction: column;
    height: 100vh;
    overflow: hidden;
    background: #fff;
    color: #222;
    font: 11px/16px 'Noto Sans', 'Noto Sans CJK SC', sans-serif;
  }

  button,
  input,
  select {
    margin: 0;
    padding: 0;
    border: 0;
    background: none;
    color: inherit;
    font: inherit;
  }

  button {
    display: flex;
    align-items: center;
    justify-content: center;
    flex: none;
    white-space: nowrap;
  }

  /* Icons and arrows */
  .icon {
    display: block;
    flex: none;
    width: 15px;
    height: 19px;
    font-family: 'Noto Sans', sans-serif;
  }
  .icon.large { width: 26px; height: 38px; }
  .icon.medium { width: 18px; height: 26px; }
  .icon.tree { width: 12px; height: 18px; }
  .icon.tiny { width: 12px; height: 15px; }
  .icon.mark { width: 9px; height: 15px; }
  .icon.rail-icon { width: 18px; height: 32px; }

  .arrow {
    flex: none;
    width: 0;
    height: 0;
    border: 3px solid transparent;
    border-top: 6px solid #111;
    border-bottom: 0;
  }
  .arrow.pale { border-top-color: #bbb; }
  .arrow.flip { border-top: 0; border-bottom: 6px solid #999; }
  .arrow.bar { position: relative; }
  .arrow.bar::before {
    position: absolute;
    top: -9px;
    left: -3px;
    width: 6px;
    height: 1px;
    background: #111;
    content: '';
  }

  .rule {
    flex: none;
    align-self: stretch;
    width: 1px;
    background: #ddd;
  }

  /* Title bar */
  .title-bar {
    display: flex;
    align-items: center;
    flex: none;
    height: 34px;
  }
  .quick {
    display: flex;
    align-items: center;
    gap: 3px;
    height: 32px;
  }
  .brand {
    width: 29px;
    color: #7d8d98;
    font-size: 19px;
    line-height: 30px;
  }
  .text { gap: 1px; }
  .text .arrow { margin-left: 3px; }
  .title {
    flex: 1;
    text-align: center;
    font-size: 12px;
  }
  .maker {
    color: #128792;
    font-size: 12px;
  }
  .controls {
    display: flex;
    align-items: center;
    gap: 14px;
    width: 46px;
    margin-left: 22px;
    overflow: hidden;
  }
  .minimize {
    width: 6px;
    height: 2px;
    margin-top: 8px;
    background: #222;
  }

  /* Tab bar */
  .tab-bar {
    display: flex;
    align-items: stretch;
    flex: none;
    height: 38px;
    overflow: hidden;
    background: #dadada;
    font-size: 13px;
  }
  .file {
    width: 64px;
    background: #4397b9;
    color: #fff;
    font-size: 12px;
  }
  .tab { padding: 0 9px 0 8px; }
  .tab.selected {
    padding: 0 10px;
    border-top: 1px solid #aaa;
    background: #fff;
    color: #0b6b86;
  }
  .search {
    display: flex;
    align-items: center;
    align-self: center;
    width: 115px;
    height: 28px;
    margin-left: auto;
    border: 1px solid #aaa;
    background: #fff;
  }
  .search input {
    flex: 1;
    min-width: 0;
    padding-left: 2px;
    font-size: 11px;
  }
  .search input::placeholder { color: #999; }
  .tool {
    width: 20px;
    margin-left: 4px;
  }
  .tool + .tool { margin-left: 0; }
  .help {
    align-self: center;
    width: 16px;
    height: 18px;
    margin: 0 -11px 0 3px;
    border-radius: 50%;
    background: #4a6ee0;
  }

  /* Ribbon */
  .ribbon {
    display: flex;
    flex: none;
    height: 126px;
    padding: 4px 0 1px;
    border-bottom: 2px solid #d9d9d9;
  }
  .group {
    display: flex;
    flex-direction: column;
    flex: none;
    box-sizing: border-box;
    border-right: 1px solid #d4d4d4;
  }
  .w-sketch { width: 146px; }
  .w-feature { width: 308px; }
  .w-sync { width: 145px; }
  .w4 { width: 78px; }
  .w2 { width: 39px; }
  .w2b { width: 44px; }
  .w4b { width: 73px; }
  .w1 { width: 22px; }
  .w12 { width: 216px; }
  .w-surface { width: 32px; }
  .w-assembly { width: 154px; }

  .group-body {
    display: flex;
    align-items: flex-start;
    flex: 1;
    padding-left: 8px;
  }
  .w-sketch .group-body { padding-left: 2px; }
  .group-body.tight { padding-left: 0; }
  .group-footer {
    display: flex;
    align-items: center;
    flex: none;
    height: 24px;
    color: #1d6c80;
  }
  .group-footer span {
    flex: 1;
    min-width: 0;
    text-align: center;
    white-space: nowrap;
  }
  .group-footer button { width: 18px; height: 16px; }

  .big {
    flex-direction: column;
    justify-content: flex-start;
    min-width: 30px;
    padding: 0 1px;
  }
  .big:disabled { color: #bbb; }
  .big-icon {
    display: flex;
    align-items: center;
    height: 46px;
    margin-bottom: 7px;
  }
  .big .arrow { margin-top: 9px; }
  .more { margin-left: 1px; }
  .more-box {
    display: flex;
    align-items: center;
    justify-content: center;
    width: 26px;
    height: 40px;
    margin: 2px 0 9px;
    border: 1px solid #e2e2e2;
  }
  .stack {
    display: flex;
    flex-direction: column;
    margin: 0 4px 0 4px;
  }
  .small {
    justify-content: flex-start;
    gap: 1px;
    height: 32px;
  }
  .small .arrow { margin-left: 4px; }

  .gallery {
    display: grid;
    grid-template-columns: repeat(3, 1fr);
    grid-template-rows: repeat(2, 1fr);
    width: 86px;
    height: 94px;
    margin: 2px 0 0 6px;
    border: 1px solid #ddd;
  }
  .scroller {
    display: flex;
    flex-direction: column;
    align-items: center;
    gap: 26px;
    width: 16px;
    padding-top: 16px;
  }

  .tool-grid {
    display: grid;
    grid-auto-rows: 38px;
    flex: 1;
    padding: 4px 2px 0 3px;
  }
  .cols1 { grid-template-columns: 1fr; }
  .cols2 { grid-template-columns: repeat(2, 1fr); }
  .cols4 { grid-template-columns: repeat(4, 1fr); }
  .cols12 { grid-template-columns: repeat(12, 1fr); }

  /* Selection bar */
  .selection-bar {
    display: flex;
    align-items: center;
    flex: none;
    height: 41px;
    border-bottom: 2px solid #a9a9a9;
  }
  .menu {
    gap: 1px;
    width: 72px;
    height: 34px;
    border-right: 1px solid #ddd;
  }
  .picker {
    position: relative;
    margin-left: 7px;
  }
  .picker select {
    display: block;
    width: 125px;
    height: 30px;
    padding-left: 2px;
    border: 1px solid #bbb;
    background: #fff;
    appearance: none;
  }
  .picker + .picker select { width: 132px; }
  .picker .arrow {
    position: absolute;
    top: 12px;
    right: 5px;
    pointer-events: none;
  }
  .tools {
    display: flex;
    align-items: center;
    gap: 1px;
    height: 36px;
    margin-left: 3px;
  }
  .tools button { width: 18px; height: 27px; }
  .tools .on { background: #c9e2e6; }
  .tools .drop { width: 9px; }
  .tools .rule { margin: 0 3px; }

  /* Resource rail */
  main {
    display: flex;
    flex: 1;
    min-height: 0;
  }
  .rail {
    display: flex;
    flex-direction: column;
    flex: none;
    width: 18px;
    border-right: 2px solid #b5b5b5;
    background: #dadada;
  }
  .rail button { height: 52px; }
  .rail .first { height: 30px; margin-bottom: 21px; }
  .rail .current { background: #fff; margin-right: -2px; }
  .rail .tall { height: 64px; }
  .rail .lead { margin-top: 7px; }
  .slot {
    height: 26px;
    margin-top: 11px;
    border: 1px solid #999;
  }

  /* Part navigator */
  .navigator {
    flex: none;
    width: 344px;
    padding-left: 4px;
    border-right: 1px solid #999;
    overflow: hidden;
  }
  .panel-title {
    display: flex;
    align-items: center;
    justify-content: space-between;
    height: 40px;
    padding: 0 12px 0 4px;
  }
  .panel-title button {
    width: 11px;
    height: 16px;
    border: 1px solid #111;
    border-top-width: 2px;
  }
  table {
    width: 333px;
    border-collapse: collapse;
    table-layout: fixed;
    font-size: 12px;
  }
  th,
  td {
    box-sizing: border-box;
    height: 29px;
    padding: 0 0 0 4px;
    border: solid #ebebeb;
    border-width: 0 1px 1px 0;
    text-align: left;
    white-space: nowrap;
  }
  tbody tr:nth-child(odd) td { height: 30px; }
  tbody tr:nth-child(even) td { background: #fafafa; }
  td:last-child,
  th:last-child { border-right: 0; }
  th {
    width: 75px;
    border-color: #d8d8d8;
    background: #efefef;
    font-weight: 400;
  }
  th.name { width: 151px; padding-left: 6px; }
  th.rest { width: auto; }
  td:first-child { padding: 0; }
  .arrow.sort {
    display: inline-block;
    margin-left: 8px;
    border: 5px solid transparent;
    border-top: 0;
    border-bottom: 8px solid #222;
  }
  .cell {
    display: flex;
    align-items: center;
    gap: 2px;
    height: 28px;
  }
  .top { padding-left: 5px; }
  .leaf { gap: 1px; padding-left: 23px; }
  .last { font-weight: 700; }
  .toggle {
    width: 9px;
    height: 12px;
    border: 1px dotted #bbb;
    font-size: 11px;
    line-height: 10px;
  }
  .branch {
    align-self: stretch;
    width: 7px;
    border-left: 1px dashed #aaa;
    background: linear-gradient(#ccc, #ccc) center / 100% 1px no-repeat;
  }
  .last .branch {
    align-self: flex-start;
    height: 14px;
    background: none;
    border-bottom: 1px dotted #aaa;
  }
  .leaf input {
    display: flex;
    align-items: center;
    justify-content: center;
    flex: none;
    width: 10px;
    height: 14px;
    border: 1px solid #143a14;
    background: #fff;
    appearance: none;
  }
  .leaf input:checked::after,
  .check::after {
    display: block;
    width: 8px;
    height: 10px;
    background: #1f9a3a;
    clip-path: polygon(0 52%, 22% 38%, 38% 58%, 76% 4%, 100% 4%, 100% 18%, 48% 96%, 26% 96%);
    content: '';
  }
  .check {
    display: block;
    flex: none;
  }
  .check::after { width: 10px; height: 14px; }

  /* Graphics area */
  .graphics {
    position: relative;
    display: flex;
    flex-direction: column;
    flex: 1;
    min-width: 0;
    background: linear-gradient(#b8b8bc, #d1d1d5 50%, #e9e9ed);
  }
  .file-tabs {
    display: flex;
    flex: none;
    height: 28px;
    border-bottom: 3px solid #4595b4;
    background: #fff;
    font-size: 12px;
  }
  .file-tabs button {
    gap: 3px;
    padding: 0 15px 0 4px;
  }
  .file-tabs .active {
    padding: 0 4px;
    background: #4397b9;
    color: #fff;
  }
  .file-tabs b { font-size: 10px; }

  .scene {
    flex: 1;
    width: 100%;
    min-height: 0;
  }
  .model text {
    fill: #2b1fa8;
    font: 34px 'Noto Sans', sans-serif;
  }
  .line { stroke: #57380c; stroke-width: 3; }
  .edge { stroke: #6b4208; stroke-width: 2; }
  .edge:not([fill]) { fill: none; }
  .ring { fill: none; stroke: #6d4308; stroke-width: 4; }
  .datum { fill: none; stroke: #5a72d8; stroke-width: 6; }
  .axis { fill: none; stroke: #4630b0; stroke-width: 3; }
  .sketch { fill: none; stroke: #6a30a0; stroke-width: 4; stroke-dasharray: 8 3; }
  .arrow-head { fill: #1b1aa8; stroke: #1b1aa8; stroke-width: 3; }
  .cross { stroke: #1b1aa8; stroke-width: 6; }

  .ime {
    position: absolute;
    right: 0;
    bottom: 13px;
    display: flex;
    align-items: center;
    width: 137px;
    height: 36px;
    background: #fff;
    color: #1f62b5;
    font-size: 18px;
  }
  .ime button { width: 23px; }
  .ime > button:last-child { width: 16px; }
  .ime .icon { width: 15px; height: 22px; }
  .ime-logo {
    flex: none;
    width: 30px;
    height: 46px;
    margin-left: -24px;
    overflow: visible;
  }
  .ime-logo text {
    fill: #fff;
    font: 700 32px 'Noto Sans', sans-serif;
  }
</style>
